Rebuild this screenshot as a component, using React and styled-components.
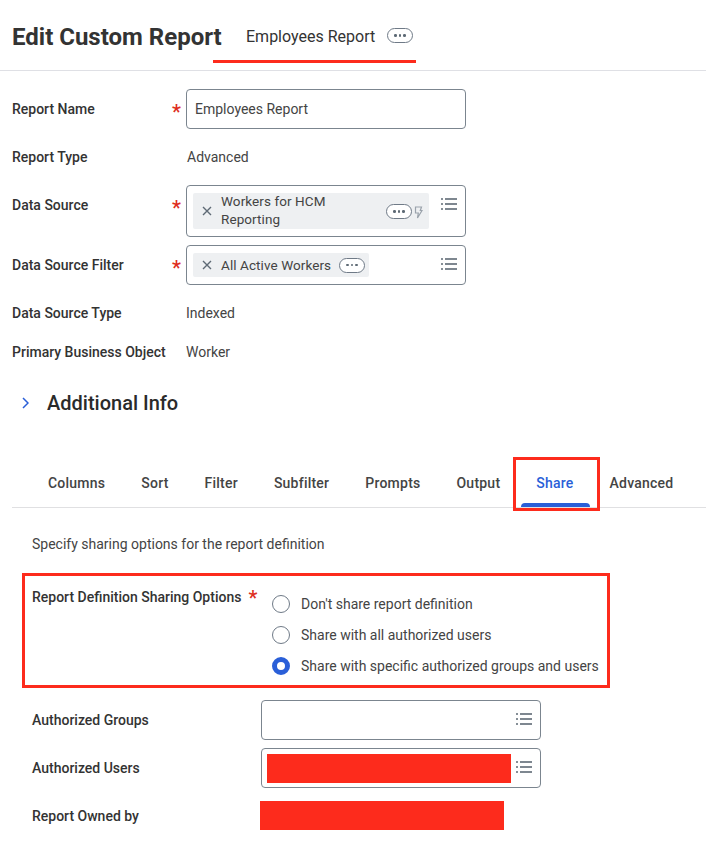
import React from 'react';
import styled, { createGlobalStyle } from 'styled-components';

const GlobalStyle = createGlobalStyle`
  *, *::before, *::after {
    box-sizing: border-box;
  }
  body {
    margin: 0;
    background: #fff;
    font-family: Roboto, "Liberation Sans", sans-serif;
    font-size: 14px;
    color: #333;
    overflow: hidden;
  }
`;

const Page = styled.div`
  width: 706px;
  height: 857px;
  overflow: hidden;
`;

const Header = styled.header`
  height: 71px;
  padding: 21px 0 0 12px;
  display: flex;
  align-items: flex-start;
  border-bottom: 1px solid #dfe0e5;
`;

const Title = styled.h1`
  margin: 0;
  width: 201px;
  white-space: nowrap;
  font-size: 24px;
  line-height: 32px;
  font-weight: 700;
  color: #333;
`;

const ReportTab = styled.div`
  width: 203px;
  height: 42px;
  padding: 6px 0 0 33px;
  display: flex;
  align-items: flex-start;
  gap: 12px;
  font-size: 16px;
  line-height: 20px;
  white-space: nowrap;
  border-bottom: 3px solid #fd2b1c;
`;

const MorePill = styled.span`
  flex: none;
  width: 26px;
  height: 15px;
  margin-top: 1px;
  display: inline-flex;
  align-items: center;
  justify-content: center;
  gap: 2px;
  border: 1px solid #6f7a87;
  border-radius: 8px;
  background: #fff;
  i {
    width: 2.5px;
    height: 2.5px;
    border-radius: 50%;
    background: #5e6a75;
  }
`;

const Form = styled.section`
  padding: 18px 0 0 12px;
  display: flex;
  flex-direction: column;
  gap: 8px;
`;

const Row = styled.div`
  display: grid;
  grid-template-columns: 160px 14px auto;
  align-items: start;
  min-height: ${(p) => p.$height || 40}px;
`;

const Label = styled.div`
  font-weight: 500;
  line-height: ${(p) => p.$line || 40}px;
  white-space: nowrap;
`;

const Star = styled.span`
  color: #de2e21;
  font-size: 20px;
  font-weight: 500;
  line-height: 46px;
  height: 40px;
`;

const Value = styled.div`
  line-height: ${(p) => p.$line || 40}px;
  color: #444;
  padding-left: ${(p) => p.$indent || 0}px;
  white-space: nowrap;
`;

const Field = styled.div`
  width: 280px;
  min-height: 40px;
  height: ${(p) => p.$height || 40}px;
  border: 1px solid #7b858f;
  border-radius: 4px;
  background: #fff;
  display: flex;
  align-items: ${(p) => (p.$tall ? 'flex-start' : 'center')};
  position: relative;
  padding: ${(p) => p.$pad || '0 0 0 8px'};
`;

const FieldText = styled.span`
  color: #444;
`;

const Chip = styled.div`
  width: ${(p) => p.$width}px;
  height: ${(p) => p.$height}px;
  margin-top: ${(p) => p.$top}px;
  padding-left: 9px;
  background: #eef0f2;
  border-radius: 2px;
  display: flex;
  align-items: ${(p) => (p.$tall ? 'flex-start' : 'center')};
  flex: none;
`;

const ChipX = styled.svg`
  width: 10px;
  height: 10px;
  flex: none;
  margin-right: 9px;
  margin-top: ${(p) => p.$top || 0}px;
  stroke: #5e6a75;
  stroke-width: 1.4;
  fill: none;
`;

const ChipLabel = styled.span`
  width: ${(p) => p.$width || 'auto'};
  color: #444;
  font-size: 13.5px;
  line-height: 18px;
  letter-spacing: 0.08px;
  margin-top: -1px;
  white-space: ${(p) => (p.$wrap ? 'normal' : 'nowrap')};
`;

const ChipPill = styled(MorePill)`
  margin: ${(p) => p.$margin};
`;

const Bolt = styled.svg`
  width: 9px;
  height: 13px;
  flex: none;
  margin: 13px 0 0 2px;
  fill: none;
  stroke: #9aa2ab;
  stroke-width: 1.2;
`;

const ListButton = styled.svg`
  position: absolute;
  right: ${(p) => p.$right || 8}px;
  top: ${(p) => p.$top || 11}px;
  width: 16px;
  height: 14px;
  stroke: #5e6a75;
  stroke-width: 1.6;
`;

const SectionTitle = styled.div`
  height: 40px;
  margin-top: 20px;
  padding-left: 22px;
  display: flex;
  align-items: center;
  gap: 18px;
  font-size: 20px;
  font-weight: 500;
  color: #2a2a2a;
`;

const Chevron = styled.svg`
  width: 7px;
  height: 12px;
  stroke: #2a5fd8;
  stroke-width: 1.5;
  fill: none;
  flex: none;
`;

const Tabs = styled.nav`
  margin: 29px 0 0 12px;
  height: 56px;
  padding: 0 0 0 36px;
  display: flex;
  gap: 36px;
  border-bottom: 1px solid #e0e0e2;
`;

const Tab = styled.div`
  position: relative;
  height: 56px;
  line-height: 62px;
  font-weight: 500;
  letter-spacing: 0.23px;
  white-space: nowrap;
  color: ${(p) => (p.$active ? '#2a5fd8' : '#444')};

  ${(p) =>
    p.$active &&
    `
    &::before {
      content: '';
      position: absolute;
      left: -15px;
      right: -16px;
      bottom: 1px;
      height: 4px;
      background: #2a5fd8;
      border-radius: 4px 4px 0 0;
    }
    &::after {
      content: '';
      position: absolute;
      left: -23px;
      right: -26px;
      top: 5px;
      height: 54px;
      border: 3px solid #fd2b1c;
    }
  `}
`;

const ShareBody = styled.section`
  padding: 26px 0 0 32px;
`;

const Hint = styled.p`
  margin: 0;
  line-height: 20px;
  color: #444;
`;

const OptionsBox = styled.div`
  width: 588px;
  height: 115px;
  margin: 19px 0 12px -10px;
  padding: 11px 0 0 7px;
  border: 3px solid #fd2b1c;
  display: grid;
  grid-template-columns: 240px 1fr;
`;

const OptionsLabel = styled.div`
  font-weight: 500;
  line-height: 20px;
  white-space: nowrap;
`;

const OptionStar = styled.span`
  color: #de2e21;
  font-size: 20px;
  margin-left: 7px;
  line-height: 20px;
  vertical-align: -3px;
`;

const Radios = styled.div`
  padding-top: 7px;
  display: flex;
  flex-direction: column;
  gap: 11px;
`;

const RadioRow = styled.label`
  display: flex;
  align-items: center;
  gap: 11px;
  height: 20px;
  color: #444;
  white-space: nowrap;
`;

const RadioDot = styled.span`
  width: 18px;
  height: 18px;
  border-radius: 50%;
  flex: none;
  background: #fff;
  border: ${(p) => (p.$checked ? '5px solid #2a5fd8' : '1px solid #6f7a87')};
`;

const AuthRow = styled.div`
  display: grid;
  grid-template-columns: 229px auto;
  align-items: start;
  margin-bottom: 8px;
  min-height: ${(p) => p.$height || 40}px;
`;

const Redaction = styled.div`
  width: 244px;
  height: 29px;
  background: #fd2b1c;
  margin: ${(p) => p.$margin || 0};
`;

const ListIcon = ({ right, top }) => (
  <ListButton viewBox="0 0 16 14" $right={right} $top={top}>
    <line x1="0" y1="2" x2="2" y2="2" />
    <line x1="4" y1="2" x2="16" y2="2" />
    <line x1="0" y1="7" x2="2" y2="7" />
    <line x1="4" y1="7" x2="16" y2="7" />
    <line x1="0" y1="12" x2="2" y2="12" />
    <line x1="4" y1="12" x2="16" y2="12" />
  </ListButton>
);

const Dots = () => (
  <>
    <i />
    <i />
    <i />
  </>
);

const CloseIcon = ({ top }) => (
  <ChipX viewBox="0 0 10 10" $top={top}>
    <path d="M1 1l8 8M9 1l-8 8" />
  </ChipX>
);

const tabs = ['Columns', 'Sort', 'Filter', 'Subfilter', 'Prompts', 'Output', 'Share', 'Advanced'];
const options = [
  { text: "Don't share report definition" },
  { text: 'Share with all authorized users' },
  { text: 'Share with specific authorized groups and users', checked: true },
];

const App = () => {
  return (
    <Page>
      <GlobalStyle />
      <Header>
        <Title>Edit Custom Report</Title>
        <ReportTab>
          Employees Report
          <MorePill>
            <Dots />
          </MorePill>
        </ReportTab>
      </Header>

      <Form>
        <Row>
          <Label>Report Name</Label>
          <Star>*</Star>
          <Field>
            <FieldText>Employees Report</FieldText>
          </Field>
        </Row>
        <Row>
          <Label>Report Type</Label>
          <span />
          <Value $indent={1}>Advanced</Value>
        </Row>
        <Row $height={52}>
          <Label>Data Source</Label>
          <Star>*</Star>
          <Field $height={52} $tall $pad="0 0 0 6px">
            <Chip $width={236} $height={36} $top={7} $tall>
              <CloseIcon top={13} />
              <ChipLabel $wrap $width="145px">
                Workers for HCM Reporting
              </ChipLabel>
              <ChipPill $margin="11px 0 0 20px">
                <Dots />
              </ChipPill>
              <Bolt viewBox="0 0 9 13">
                <path d="M1.5 1h6L6.3 4.5H8L3.5 12 4.3 7H1.5z" />
              </Bolt>
            </Chip>
            <ListIcon top={11} />
          </Field>
        </Row>
        <Row>
          <Label>Data Source Filter</Label>
          <Star>*</Star>
          <Field $pad="0 0 0 6px">
            <Chip $width={176} $height={24} $top={0}>
              <CloseIcon />
              <ChipLabel>All Active Workers</ChipLabel>
              <ChipPill $margin="0 0 0 8px">
                <Dots />
              </ChipPill>
            </Chip>
            <ListIcon top={11} />
          </Field>
        </Row>
        <Row>
          <Label>Data Source Type</Label>
          <span />
          <Value>Indexed</Value>
        </Row>
        <Row $height={22}>
          <Label $line={22}>Primary Business Object</Label>
          <span />
          <Value $line={22}>Worker</Value>
        </Row>
      </Form>

      <SectionTitle>
        <Chevron viewBox="0 0 7 12">
          <path d="M1 1l5 5-5 5" />
        </Chevron>
        Additional Info
      </SectionTitle>

      <Tabs>
        {tabs.map((tab) => (
          <Tab key={tab} $active={tab === 'Share'}>
            {tab}
          </Tab>
        ))}
      </Tabs>

      <ShareBody>
        <Hint>Specify sharing options for the report definition</Hint>
        <OptionsBox>
          <OptionsLabel>
            Report Definition Sharing Options
            <OptionStar>*</OptionStar>
          </OptionsLabel>
          <Radios>
            {options.map((option) => (
              <RadioRow key={option.text}>
                <RadioDot $checked={option.checked} />
                {option.text}
              </RadioRow>
            ))}
          </Radios>
        </OptionsBox>
        <AuthRow>
          <Label>Authorized Groups</Label>
          <Field>
            <ListIcon right={8} top={11} />
          </Field>
        </AuthRow>
        <AuthRow>
          <Label>Authorized Users</Label>
          <Field $pad="0 0 0 5px">
            <Redaction />
            <ListIcon right={8} top={11} />
          </Field>
        </AuthRow>
        <AuthRow>
          <Label>Report Owned by</Label>
          <Redaction $margin="5px 0 0 -1px" />
        </AuthRow>
      </ShareBody>
    </Page>
  );
};

export default App;
